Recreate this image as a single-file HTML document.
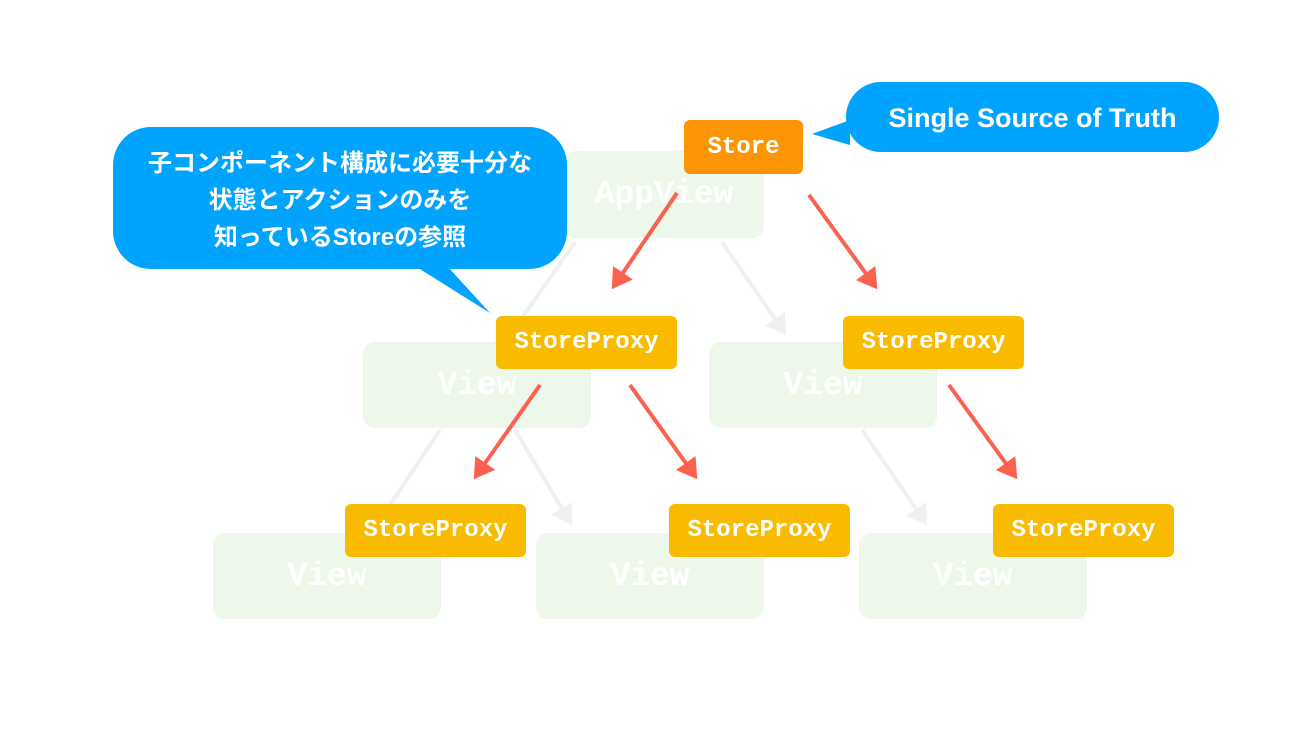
<!DOCTYPE html>
<html><head><meta charset="utf-8"><style>
body{margin:0;width:1300px;height:731px;background:#fff;position:relative;overflow:hidden;font-family:"Liberation Sans","Noto Sans CJK JP",sans-serif}
.g{position:absolute;background:#edf7ea;border-radius:12px;color:#fff;font:bold 33px "Liberation Mono",monospace;display:flex;align-items:center;justify-content:center}
.p{position:absolute;background:#f8bb00;border-radius:6px;color:#fff;font:bold 24px "Liberation Mono",monospace;display:flex;align-items:center;justify-content:center;width:181px;height:53px}
svg{position:absolute;left:0;top:0}
.b{position:absolute;background:#00a3fe;color:#fff;font-weight:bold;display:flex;align-items:center;justify-content:center;text-align:center}
</style></head><body>
<div class="g" style="left:564px;top:151px;width:200px;height:87px">AppView</div>
<div class="g" style="left:363px;top:342px;width:228px;height:86px">View</div>
<div class="g" style="left:709px;top:342px;width:228px;height:86px">View</div>
<div class="g" style="left:213px;top:533px;width:228px;height:86px">View</div>
<div class="g" style="left:536px;top:533px;width:228px;height:86px">View</div>
<div class="g" style="left:859px;top:533px;width:228px;height:86px">View</div>
<svg width="1300" height="731">
<defs>
<marker id="r" markerWidth="6" markerHeight="6" refX="4" refY="3" orient="auto" markerUnits="strokeWidth"><path d="M0,0 L5,3 L0,6 Z" fill="#fc6150"/></marker>
<marker id="gr" markerWidth="6" markerHeight="6" refX="4" refY="3" orient="auto" markerUnits="strokeWidth"><path d="M0,0 L5,3 L0,6 Z" fill="#f0f0f0"/></marker>
</defs>
<g stroke="#f0f0f0" stroke-width="4" fill="none">
<line x1="575" y1="242" x2="522" y2="318"/>
<line x1="722" y1="242" x2="784" y2="332" marker-end="url(#gr)"/>
<line x1="440" y1="430" x2="390" y2="505"/>
<line x1="515" y1="430" x2="570" y2="522" marker-end="url(#gr)"/>
<line x1="862" y1="430" x2="925" y2="522" marker-end="url(#gr)"/>
</g>
<g stroke="#fc6150" stroke-width="4" fill="none">
<line x1="677" y1="193" x2="614" y2="286" marker-end="url(#r)"/>
<line x1="809" y1="195" x2="875" y2="286" marker-end="url(#r)"/>
<line x1="540" y1="385" x2="476" y2="476" marker-end="url(#r)"/>
<line x1="630" y1="385" x2="695" y2="476" marker-end="url(#r)"/>
<line x1="949" y1="385" x2="1015" y2="476" marker-end="url(#r)"/>
</g>
<path d="M415,266 L447,266 L490,313 Z" fill="#00a3fe"/>
<path d="M850,120 L850,145 L812,134 Z" fill="#00a3fe"/>
</svg>
<div class="p" style="left:684px;top:120px;width:119px;height:54px;background:#fc9503">Store</div>
<div class="p" style="left:496px;top:316px">StoreProxy</div>
<div class="p" style="left:843px;top:316px">StoreProxy</div>
<div class="p" style="left:345px;top:504px">StoreProxy</div>
<div class="p" style="left:669px;top:504px">StoreProxy</div>
<div class="p" style="left:993px;top:504px">StoreProxy</div>
<div class="b" style="left:846px;top:82px;width:373px;height:70px;border-radius:35px;font-size:27px;padding-top:2px;box-sizing:border-box">Single Source of Truth</div>
<div class="b" style="left:113px;top:127px;width:454px;height:142px;border-radius:38px;font-size:24px;line-height:37px;padding-top:4px;box-sizing:border-box">子コンポーネント構成に必要十分な<br>状態とアクションのみを<br>知っているStoreの参照</div>
</body></html>
